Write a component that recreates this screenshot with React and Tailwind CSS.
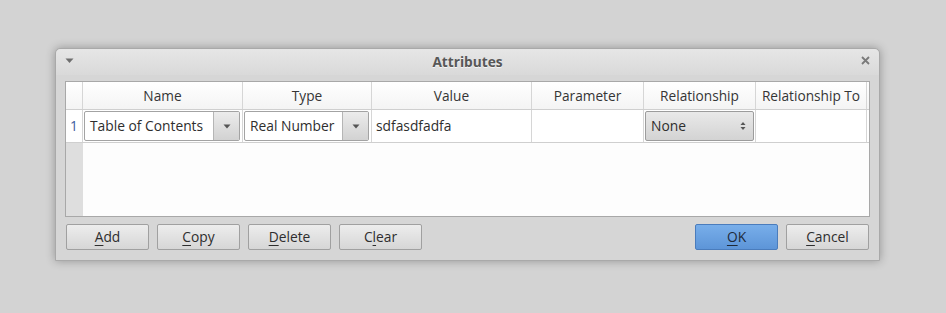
import React from "react";

const FONT = { fontFamily: '"Open Sans", "Noto Sans", sans-serif' };

const COLS = ["Name", "Type", "Value", "Parameter", "Relationship", "Relationship To"];

function DownArrow() {
  return (
    <svg width="8" height="5" viewBox="0 0 8 5">
      <path d="M0.5 0.5 L7.5 0.5 L4 4.5 Z" fill="#555" />
    </svg>
  );
}

function Combo({ label, btnW }) {
  return (
    <div className="flex h-full w-full overflow-hidden rounded-[2px] border border-[#a3a3a3] bg-white">
      <div className="flex flex-1 items-center pl-[5px] text-[13.8px] text-[#2e2e2e]">{label}</div>
      <div
        className="flex items-center justify-center border-l border-[#b5b5b5] bg-gradient-to-b from-[#ececec] to-[#d2d2d2]"
        style={{ width: btnW }}
      >
        <DownArrow />
      </div>
    </div>
  );
}

function Spin({ label }) {
  return (
    <div className="flex h-full w-full items-center justify-between rounded-[2px] border border-[#9c9c9c] bg-gradient-to-b from-[#e9e9e9] to-[#d3d3d3] pl-[5px] pr-[7px] text-[13.8px] text-[#2e2e2e]">
      <span>{label}</span>
      <svg width="6" height="10" viewBox="0 0 6 10">
        <path d="M0.5 4 L5.5 4 L3 1 Z" fill="#555" />
        <path d="M0.5 6 L5.5 6 L3 9 Z" fill="#555" />
      </svg>
    </div>
  );
}

function Btn({ pre, u, post, primary }) {
  return (
    <button
      className={
        "flex h-[26px] w-[83px] items-center justify-center rounded-[2px] border text-[13.8px] " +
        (primary
          ? "border-[#4a7cbc] bg-gradient-to-b from-[#78aeea] to-[#5d95d8] text-[#1e2a3a]"
          : "border-[#a0a0a0] bg-gradient-to-b from-[#ededed] to-[#d6d6d6] text-[#2e2e2e]")
      }
    >
      {pre}
      <span className="underline underline-offset-[3px]">{u}</span>
      {post}
    </button>
  );
}

export default function App() {
  return (
    <div className="h-[313px] w-[946px] bg-[#d3d3d3] pl-[55px] pt-[48px]" style={FONT}>
      <div className="flex h-[213px] w-[825px] flex-col rounded-t-[5px] border border-[#a9a9a9] bg-[#d6d6d6] shadow-[0_0_10px_rgba(0,0,0,0.3)]">
        {/* title bar */}
        <div className="relative flex h-[26px] items-center justify-center rounded-t-[5px] bg-gradient-to-b from-[#e6e6e6] to-[#d9d9d9]">
          <div className="absolute left-[9px] top-[9px]">
            <svg width="9" height="6" viewBox="0 0 9 6">
              <path d="M0.5 0.5 L8.5 0.5 L4.5 5 Z" fill="#6e6e6e" />
            </svg>
          </div>
          <span className="mt-[1px] text-[13.7px] font-bold text-[#575757] [text-shadow:0_1px_0_#f4f4f4]">Attributes</span>
          <div className="absolute right-[9px] top-[7px]">
            <svg width="9" height="9" viewBox="0 0 9 9">
              <path d="M1 1 L8 8 M8 1 L1 8" stroke="#7a7a7a" strokeWidth="1.8" />
            </svg>
          </div>
        </div>

        {/* table */}
        <div className="ml-[9px] mt-[6px] flex h-[136px] w-[805px] flex-col border border-[#a8a8a8] bg-white">
          <div className="grid h-[28px] grid-cols-[17px_160px_129px_160px_112px_112px_111px] border-b border-[#cfcfcf] bg-gradient-to-b from-[#ffffff] to-[#f4f4f4]">
            <div className="border-r border-[#d6d6d6]" />
            {COLS.map((c) => (
              <div key={c} className="flex items-center justify-center border-r border-[#d6d6d6] pt-[1px] text-[13.7px] text-[#353535]">
                {c}
              </div>
            ))}
          </div>
          <div className="grid h-[33px] grid-cols-[17px_160px_129px_160px_112px_112px_111px] border-b border-[#cfcfcf]">
            <div className="flex items-center justify-center border-r border-[#d6d6d6] text-[13.7px] text-[#3b5ca0]">1</div>
            <div className="border-r border-[#d6d6d6] py-[1px] pl-[1px] pr-[2px]">
              <Combo label="Table of Contents" btnW={26} />
            </div>
            <div className="border-r border-[#d6d6d6] py-[1px] pl-[1px] pr-[2px]">
              <Combo label="Real Number" btnW={26} />
            </div>
            <div className="flex items-center border-r border-[#d6d6d6] pl-[4px] text-[13.8px] text-[#2e2e2e]">sdfasdfadfa</div>
            <div className="border-r border-[#d6d6d6]" />
            <div className="border-r border-[#d6d6d6] py-[1px] pl-[1px] pr-[1px]">
              <Spin label="None" />
            </div>
            <div className="border-r border-[#d6d6d6]" />
          </div>
          <div className="flex flex-1">
            <div className="w-[17px] bg-[#dedede]" />
            <div className="flex-1 bg-[#fdfdfd]" />
          </div>
        </div>

        {/* buttons */}
        <div className="mt-[7px] flex items-center pl-[10px] pr-[10px]">
          <div className="flex gap-[8px]">
            <Btn pre="" u="A" post="dd" />
            <Btn pre="" u="C" post="opy" />
            <Btn pre="" u="D" post="elete" />
            <Btn pre="C" u="l" post="ear" />
          </div>
          <div className="ml-auto flex gap-[8px]">
            <Btn pre="" u="O" post="K" primary />
            <Btn pre="" u="C" post="ancel" />
          </div>
        </div>
      </div>
    </div>
  );
}
